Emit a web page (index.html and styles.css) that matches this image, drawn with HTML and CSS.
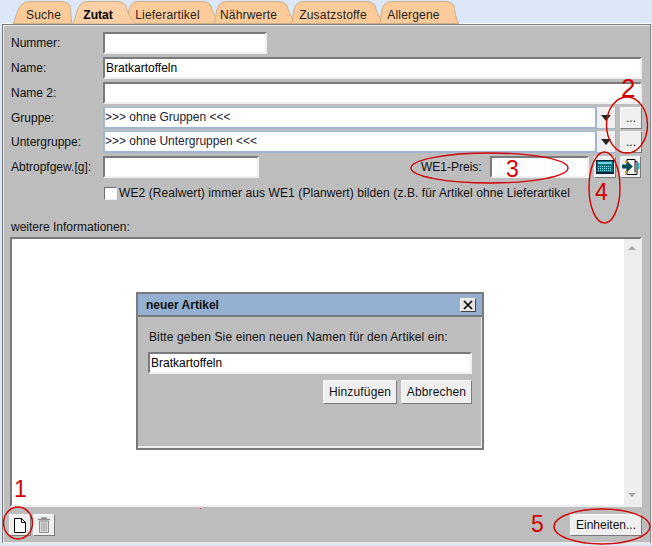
FILE: index.html
```html
<!DOCTYPE html>
<html lang="de">
<head>
<meta charset="utf-8">
<title>Zutat</title>
<link rel="stylesheet" href="styles.css">
</head>
<body>
<div class="app">
  <nav class="tabs">
    <div class="tab w-suche"><svg class="tab-bg" width="72" height="24" viewBox="0 0 72 24"><path d="M13 23.5C16 21 16 6 25 2.5Q27 1.5 30 1.5H60Q68 1.5 70 6C71 12 71 20 72 23.5Z" class="tab-shape"/></svg><span>Suche</span></div>
    <div class="tab w-zutat active"><svg class="tab-bg" width="64" height="24" viewBox="0 0 64 24"><path d="M0 24C5 20 3 7 11 2.5Q13 1.5 16 1.5H45Q52 1.5 54 6C55 12 59 20 64 24Z" class="tab-shape"/></svg><span>Zutat</span></div>
    <div class="tab w-liefer"><svg class="tab-bg" width="100" height="24" viewBox="0 0 100 24"><path d="M2 23.5C5 21 2 7 10 2.5Q12 1.5 15 1.5H78Q85 1.5 87 6C89 12 92 20 96 23.5Z" class="tab-shape"/></svg><span>Lieferartikel</span></div>
    <div class="tab w-naehr"><svg class="tab-bg" width="90" height="24" viewBox="0 0 90 24"><path d="M2 23.5C5 21 2 7 10 2.5Q12 1.5 15 1.5H66Q73 1.5 75 6C77 12 80 20 84 23.5Z" class="tab-shape"/></svg><span>Nährwerte</span></div>
    <div class="tab w-zusatz"><svg class="tab-bg" width="100" height="24" viewBox="0 0 100 24"><path d="M2 23.5C5 21 2 7 10 2.5Q12 1.5 15 1.5H77Q84 1.5 86 6C88 12 91 20 95 23.5Z" class="tab-shape"/></svg><span>Zusatzstoffe</span></div>
    <div class="tab w-allerg"><svg class="tab-bg" width="85" height="24" viewBox="0 0 85 24"><path d="M2 23.5C5 21 2 7 10 2.5Q12 1.5 15 1.5H68Q75 1.5 77 6C78 12 79 20 82 23.5Z" class="tab-shape"/></svg><span>Allergene</span></div>
  </nav>

  <main class="panel">
    <div class="row"><label class="lbl">Nummer:</label><div class="field w-num"></div></div>
    <div class="row"><label class="lbl">Name:</label><div class="field grow">Bratkartoffeln</div></div>
    <div class="row"><label class="lbl">Name 2:</label><div class="field grow"></div></div>
    <div class="row">
      <label class="lbl">Gruppe:</label>
      <div class="combo"><div class="combo-text">&gt;&gt;&gt; ohne Gruppen &lt;&lt;&lt;</div><div class="combo-arrow"></div></div>
      <button class="btn btn-dots">...</button>
    </div>
    <div class="row row-tight">
      <label class="lbl">Untergruppe:</label>
      <div class="combo"><div class="combo-text">&gt;&gt;&gt; ohne Untergruppen &lt;&lt;&lt;</div><div class="combo-arrow"></div></div>
      <button class="btn btn-dots">...</button>
    </div>
    <div class="row">
      <label class="lbl">Abtropfgew.[g]:</label>
      <div class="field w-abt"></div>
      <span class="lbl-we">WE1-Preis:</span>
      <div class="field w-we"></div>
      <button class="btn btn-icon">
        <svg width="18" height="14" viewBox="0 0 18 14"><rect x="0.5" y="0.500" width="17" height="13" fill="#0a6f7c" stroke="#06233a"/><rect x="2" y="2" width="14" height="2" fill="#6fd4dc"/><path d="M2 6.500h14M2 8.500h14M2 10.500h14" stroke="#8fe6ea" stroke-dasharray="1 1"/><path d="M1 12.500h16" stroke="#06233a"/></svg>
      </button>
      <button class="btn btn-icon btn-icon2">
        <svg width="19" height="19" viewBox="0 0 19 19"><path d="M6 1.500h8v2h2v13H6z" fill="#fff" stroke="#000"/><path d="M14 3.500v11" stroke="#000"/><rect x="16.500" y="5" width="2" height="6" fill="#18b8c8"/><path d="M5 3v2M5 13v2M5 16v1" stroke="#c8a800" stroke-width="2"/><path d="M1 6.500h5v-3.500l6 5.500-6 5.500v-3.500H1z" fill="#0c4f58"/></svg>
      </button>
    </div>
    <div class="check-row"><span class="check"></span><span class="check-text">WE2 (Realwert) immer aus WE1 (Planwert) bilden (z.B. für Artikel ohne Lieferartikel</span></div>
    <div class="info-label">weitere Informationen:</div>
    <div class="textarea">
      <div class="area-body"></div>
      <div class="scrollbar"><span class="sb-up"></span><span class="sb-down"></span></div>
    </div>
    <footer class="foot">
      <button class="btn btn-tool">
        <svg width="12" height="15" viewBox="0 0 12 15"><path d="M.5.5h7l4 4v10H.5z" fill="#fff" stroke="#000"/><path d="M7.500.5v4h4" fill="none" stroke="#000"/></svg>
      </button>
      <button class="btn btn-tool">
        <svg width="14" height="16" viewBox="0 0 14 16"><path d="M1 2.500h12M5 2.500v-1.500h4v1.500" fill="none" stroke="#8e8e8e" stroke-width="1.500"/><path d="M2.500 4h9v11.500h-9z" fill="#d8d8d8" stroke="#8e8e8e"/><path d="M5 5.500v8.500M7 5.500v8.500M9 5.500v8.500" stroke="#9c9c9c"/></svg>
      </button>
      <button class="btn btn-units">Einheiten...</button>
    </footer>
  </main>

  <section class="dialog">
    <header class="dlg-title"><span>neuer Artikel</span><span class="dlg-close"><svg width="10" height="10" viewBox="0 0 10 10"><path d="M1 1l8 8M9 1l-8 8" stroke="#000" stroke-width="1.600"/></svg></span></header>
    <div class="dlg-body">
      <p class="dlg-msg">Bitte geben Sie einen neuen Namen für den Artikel ein:</p>
      <div class="field dlg-field">Bratkartoffeln</div>
      <div class="dlg-actions"><button class="btn btn-dlg">Hinzufügen</button><button class="btn btn-dlg">Abbrechen</button></div>
    </div>
  </section>

  <svg class="marks" width="652" height="546" viewBox="0 0 652 546">
    <g fill="none" stroke="#d40000" stroke-width="1.400">
      <ellipse cx="18" cy="523" rx="14.500" ry="16"/>
      <ellipse cx="627" cy="125" rx="20.500" ry="28"/>
      <ellipse cx="489.500" cy="168" rx="78.500" ry="15"/>
      <ellipse cx="604.500" cy="187.500" rx="15.500" ry="35.500"/>
      <ellipse cx="602" cy="526.500" rx="48" ry="17.500"/>
    </g>
    <g class="mark-num">
      <text x="14" y="497">1</text>
      <text x="621" y="97" class="mark-big">2</text>
      <text x="506" y="177">3</text>
      <text x="595" y="200">4</text>
      <text x="531" y="532">5</text>
    </g>
    <rect x="200" y="508" width="1" height="1" fill="#e04040"/>
  </svg>
</div>
</body>
</html>
```
FILE: styles.css
```css
* { box-sizing: border-box; }
html, body { margin: 0; padding: 0; }
body { background: #dce8f8; font-family: "Liberation Sans", Arial, sans-serif; font-size: 12px; color: #111; overflow: hidden; }
.app { position: relative; width: 652px; height: 546px; }

.tabs { display: flex; height: 24px; position: relative; }
.tab { position: relative; height: 24px; display: flex; align-items: flex-end; justify-content: center; padding-bottom: 2px; letter-spacing: .2px; color: #222; flex: none; }
.tab span { position: relative; }
.tab-bg { position: absolute; left: 0; top: 0; }
.tab-shape { fill: #fdcb9a; stroke: #c8b08c; stroke-width: 1; }
.w-suche { width: 72px; padding-left: 15px; }
.w-zutat { width: 64px; margin-right: -12px; padding-right: 12px; font-weight: bold; letter-spacing: 0; color: #000; z-index: 2; }
.w-zutat .tab-shape { fill: #fcd0a4; }
.w-liefer { width: 100px; margin-right: -12px; padding-right: 13px; }
.w-naehr { width: 90px; margin-right: -13px; padding-right: 17px; }
.w-zusatz { width: 100px; margin-right: -12px; padding-right: 12px; }
.w-allerg { width: 85px; padding-right: 12px; }

.panel { margin: 0 1px 0 2px; height: 520px; background: #bdbdbd; border: 1px solid #7d7d7d; border-right-color: #8a8a8a; border-bottom: 2px solid #eaeaea; box-shadow: inset 1px 1px 0 #e6e6e6, 0 -1px 0 #fff; padding: 7px 8px 0 8px; display: flex; flex-direction: column; }
.row { display: flex; align-items: center; height: 22px; margin-bottom: 3px; }
.row-tight { margin-top: -1px; }
.lbl { width: 92px; flex: none; }
.field { height: 22px; background: #fff; border: 2px solid; border-color: #7a7a7a #f0f0f0 #f0f0f0 #7a7a7a; padding: 0 1px; line-height: 18px; color: #000; }
.grow { flex: 1; }
.w-num { width: 164px; }
.w-abt { width: 156px; }
.lbl-we { margin-left: 162px; width: 69px; }
.w-we { width: 99px; }
.combo { flex: 1; display: flex; height: 22px; }
.combo-text { flex: 1; background: #fff; border: 1px solid #9db6d2; border-width: 1px 2px 2px 2px; padding: 0 0; line-height: 18px; color: #223; }
.combo-arrow { width: 19px; background: #f0f0f0; position: relative; border-right: 1px solid #9db6d2; border-bottom: 1px solid #9db6d2; }
.combo-arrow::after { content: ""; position: absolute; left: 4px; top: 8px; border: 5px solid transparent; border-top: 6px solid #222; border-bottom: 0; }
.btn { font: inherit; color: #111; background: #efefef; border: 1px solid; border-color: #fafafa #7a7a7a #7a7a7a #fafafa; padding: 0; display: flex; align-items: center; justify-content: center; }
.btn-dots { width: 22px; height: 22px; margin-left: 4px; align-items: flex-end; padding-bottom: 3px; }
.btn-icon { width: 22px; height: 22px; margin-left: 5px; }
.btn-icon2 { margin-left: 4px; width: 21px; }

.check-row { display: flex; align-items: center; margin: 5px 0 0 93px; height: 14px; }
.check { width: 13px; height: 13px; background: #fff; border: 1px solid; border-color: #6e6e6e #eee #eee #6e6e6e; margin-right: 2px; }
.check-text { white-space: nowrap; letter-spacing: .09px; }
.info-label { margin-top: 20px; height: 14px; line-height: 14px; }
.textarea { height: 270px; margin-top: 3px; margin-left: -1px; display: flex; background: #fff; border: 2px solid; border-color: #7a7a7a #eee #eee #7a7a7a; }
.area-body { flex: 1; }
.scrollbar { width: 16px; background: #eeeeee; position: relative; display: flex; flex-direction: column; justify-content: space-between; padding: 7px 4px 8px; }
.sb-up, .sb-down { display: block; width: 0; height: 0; border: 4px solid transparent; }
.sb-up { border-bottom: 4px solid #aaa; border-top: 0; }
.sb-down { border-top: 4px solid #aaa; border-bottom: 0; }
.foot { display: flex; align-items: center; margin-top: 7px; margin-left: -2px; gap: 2px; }
.btn-tool { width: 22px; height: 22px; }
.btn-units { margin-left: auto; width: 72px; height: 22px; }

.dialog { position: absolute; left: 136px; top: 292px; width: 348px; height: 158px; background: #bdbdbd; border: 2px solid #7a7a7a; box-shadow: inset -1px -2px 0 #eee; display: flex; flex-direction: column; }
.dlg-title { height: 23px; flex: none; background: #94b0d0; border-bottom: 2px solid #7a7a7a; display: flex; align-items: center; justify-content: space-between; padding: 0 6px 0 8px; font-weight: bold; color: #111; }
.dlg-close { width: 16px; height: 14px; background: #e4e4e4; border: 1px solid; border-color: #fff #444 #444 #fff; display: flex; align-items: center; justify-content: center; }
.dlg-body { padding: 10px 10px 0 10px; display: flex; flex-direction: column; }
.dlg-msg { margin: 2px 0 0 1px; height: 16px; line-height: 16px; letter-spacing: .12px; }
.dlg-field { margin-top: 7px; padding-left: 1px; }
.dlg-actions { display: flex; justify-content: flex-end; gap: 4px; margin-top: 6px; }
.btn-dlg { height: 24px; padding: 0 6px; letter-spacing: .15px; }
.btn-dlg:first-child { width: 74px; }
.btn-dlg:last-child { width: 71px; }

.marks { position: absolute; left: 0; top: 0; pointer-events: none; }
.mark-num { fill: #d40000; font-family: "Liberation Sans", Arial, sans-serif; font-size: 23px; }
.mark-big { font-size: 26px; }
```
